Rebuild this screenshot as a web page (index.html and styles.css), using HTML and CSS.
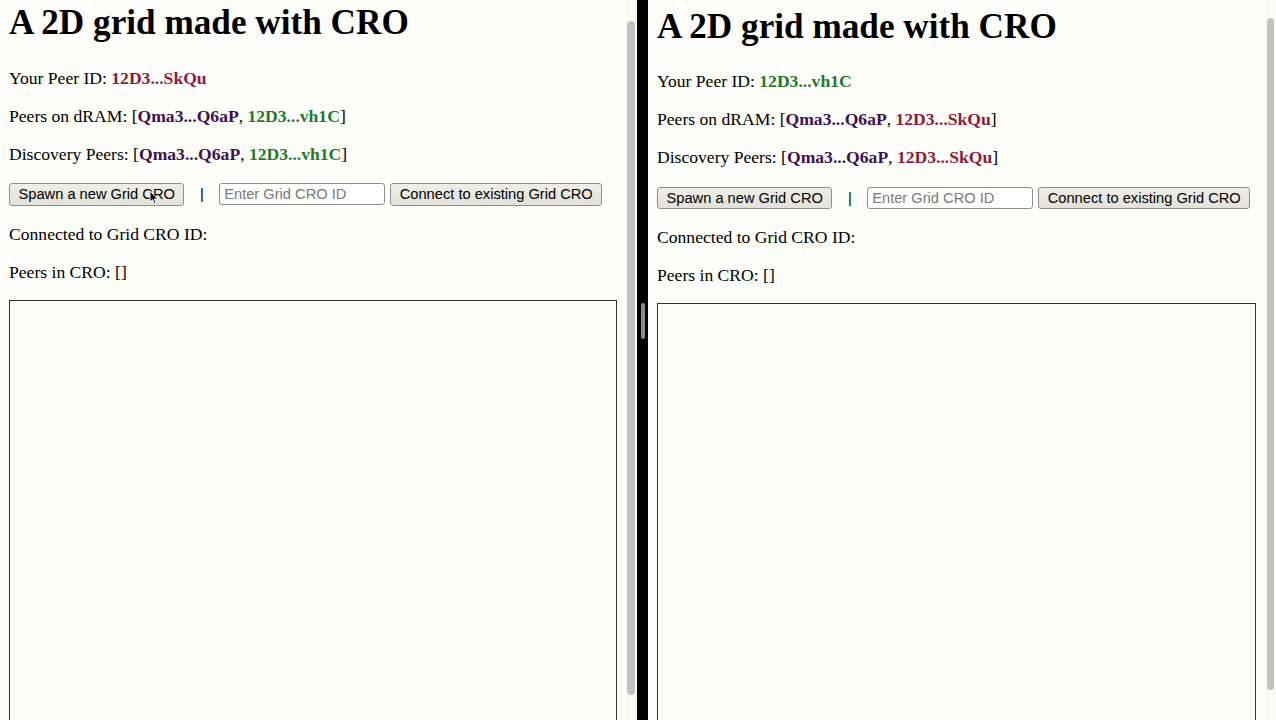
FILE: index.html
```html
<!DOCTYPE html>
<html lang="en">
<head>
<meta charset="utf-8">
<title>A 2D grid made with CRO</title>
<link rel="stylesheet" href="styles.css">
</head>
<body>
<div class="screen">
  <section class="pane pane-left">
    <div class="page page-left">
      <h1 class="title">A 2D grid made with CRO</h1>
      <p class="line">Your Peer ID: <b class="peer red">12D3...SkQu</b></p>
      <p class="line">Peers on dRAM: [<b class="peer purple">Qma3...Q6aP</b>, <b class="peer green">12D3...vh1C</b>]</p>
      <p class="line">Discovery Peers: [<b class="peer purple">Qma3...Q6aP</b>, <b class="peer green">12D3...vh1C</b>]</p>
      <div class="controls">
        <button class="btn btn-spawn" type="button">Spawn a new Grid CRO</button>
        <span class="sep">|</span>
        <input class="field" type="text" placeholder="Enter Grid CRO ID">
        <button class="btn" type="button">Connect to existing Grid CRO</button>
        <svg class="cursor" width="10" height="15" viewBox="0 0 10 15" aria-hidden="true">
          <path d="M1 1 L1 12 L3.6 9.6 L5.4 13.6 L7 12.9 L5.3 9 L8.8 9 Z" fill="#000" stroke="#fff" stroke-width="0.9" stroke-linejoin="round"/>
        </svg>
      </div>
      <p class="line">Connected to Grid CRO ID: </p>
      <p class="line">Peers in CRO: []</p>
      <div class="grid-box"></div>
    </div>
    <div class="scrollbar"><div class="thumb thumb-left"></div></div>
  </section>

  <div class="divider"><div class="divider-handle"></div></div>

  <section class="pane pane-right">
    <div class="page page-right">
      <h1 class="title">A 2D grid made with CRO</h1>
      <p class="line">Your Peer ID: <b class="peer green">12D3...vh1C</b></p>
      <p class="line">Peers on dRAM: [<b class="peer purple">Qma3...Q6aP</b>, <b class="peer red">12D3...SkQu</b>]</p>
      <p class="line">Discovery Peers: [<b class="peer purple">Qma3...Q6aP</b>, <b class="peer red">12D3...SkQu</b>]</p>
      <div class="controls">
        <button class="btn" type="button">Spawn a new Grid CRO</button>
        <span class="sep">|</span>
        <input class="field" type="text" placeholder="Enter Grid CRO ID">
        <button class="btn" type="button">Connect to existing Grid CRO</button>
      </div>
      <p class="line">Connected to Grid CRO ID: </p>
      <p class="line">Peers in CRO: []</p>
      <div class="grid-box"></div>
    </div>
    <div class="scrollbar"><div class="thumb thumb-right"></div></div>
  </section>
</div>
</body>
</html>
```

FILE: styles.css
```css
html, body {
  margin: 0;
  padding: 0;
  background: #fdfdfa;
}

.screen {
  display: flex;
  width: 1276px;
  height: 720px;
  overflow: hidden;
  font-family: "Liberation Serif", "Times New Roman", serif;
  color: #000;
}

.pane {
  display: flex;
  height: 720px;
  overflow: hidden;
  background: #fdfdfa;
}

.pane-left {
  width: 637px;
}

.pane-right {
  flex: 1;
}

.page {
  flex: 1;
  min-width: 0;
  padding: 0 9px;
  box-sizing: border-box;
}

.page-left {
  padding-top: 3px;
}

.page-right {
  padding-top: 6.5px;
}

.title {
  margin: 0 0 24.5px;
  font-size: 35.2px;
  line-height: 40px;
  font-weight: bold;
  white-space: nowrap;
}

.line {
  margin: 0 0 18px;
  font-size: 17.6px;
  line-height: 20px;
  white-space: nowrap;
}

.peer {
  font-weight: bold;
}

.red {
  color: #8f1b3c;
}

.purple {
  color: #3e1150;
}

.green {
  color: #1f7a2a;
}

.controls {
  position: relative;
  display: flex;
  align-items: center;
  padding-top: 1.5px;
  height: 22.5px;
  margin-bottom: 18px;
}

.btn {
  height: 22.5px;
  margin: 0;
  padding: 0 8.5px;
  font-family: "Liberation Sans", Arial, sans-serif;
  font-size: 14.67px;
  line-height: 20px;
  color: #000;
  background: linear-gradient(#efefe8, #e2e2da);
  border: 1px solid #8e8e8e;
  border-radius: 3px;
  white-space: nowrap;
}

.sep {
  margin: 0 15.5px 0 15.5px;
  font-family: "Liberation Sans", Arial, sans-serif;
  font-size: 14.67px;
  line-height: 20px;
}

.field {
  width: 166px;
  height: 22px;
  margin: 0 5px 0 0;
  padding: 0 4px;
  box-sizing: border-box;
  font-family: "Liberation Sans", Arial, sans-serif;
  font-size: 14.67px;
  background: #fff;
  border: 1px solid #8e8e8e;
  border-radius: 3px;
}

.field::placeholder {
  color: #7a7a7a;
}

.cursor {
  position: absolute;
  left: 140px;
  top: 8px;
}

.grid-box {
  width: 100%;
  height: 600px;
  box-sizing: border-box;
  border: 1px solid #333;
  background: #fdfdfa;
}

.scrollbar {
  width: 11px;
  flex: none;
  background: #fafaf7;
}

.thumb {
  background: #c2c2c2;
  border-radius: 4px;
}

.thumb-left {
  width: 8px;
  margin: 20.5px 0 0 1px;
  height: 674px;
}

.thumb-right {
  width: 6.5px;
  margin: 18px 0 0 2px;
  height: 672px;
}

.divider {
  width: 11px;
  flex: none;
  height: 720px;
  background: #000;
  display: flex;
  justify-content: center;
  padding-top: 303px;
  box-sizing: border-box;
}

.divider-handle {
  width: 4px;
  height: 36px;
  background: #8a8a8a;
  border-radius: 2px;
}
```
